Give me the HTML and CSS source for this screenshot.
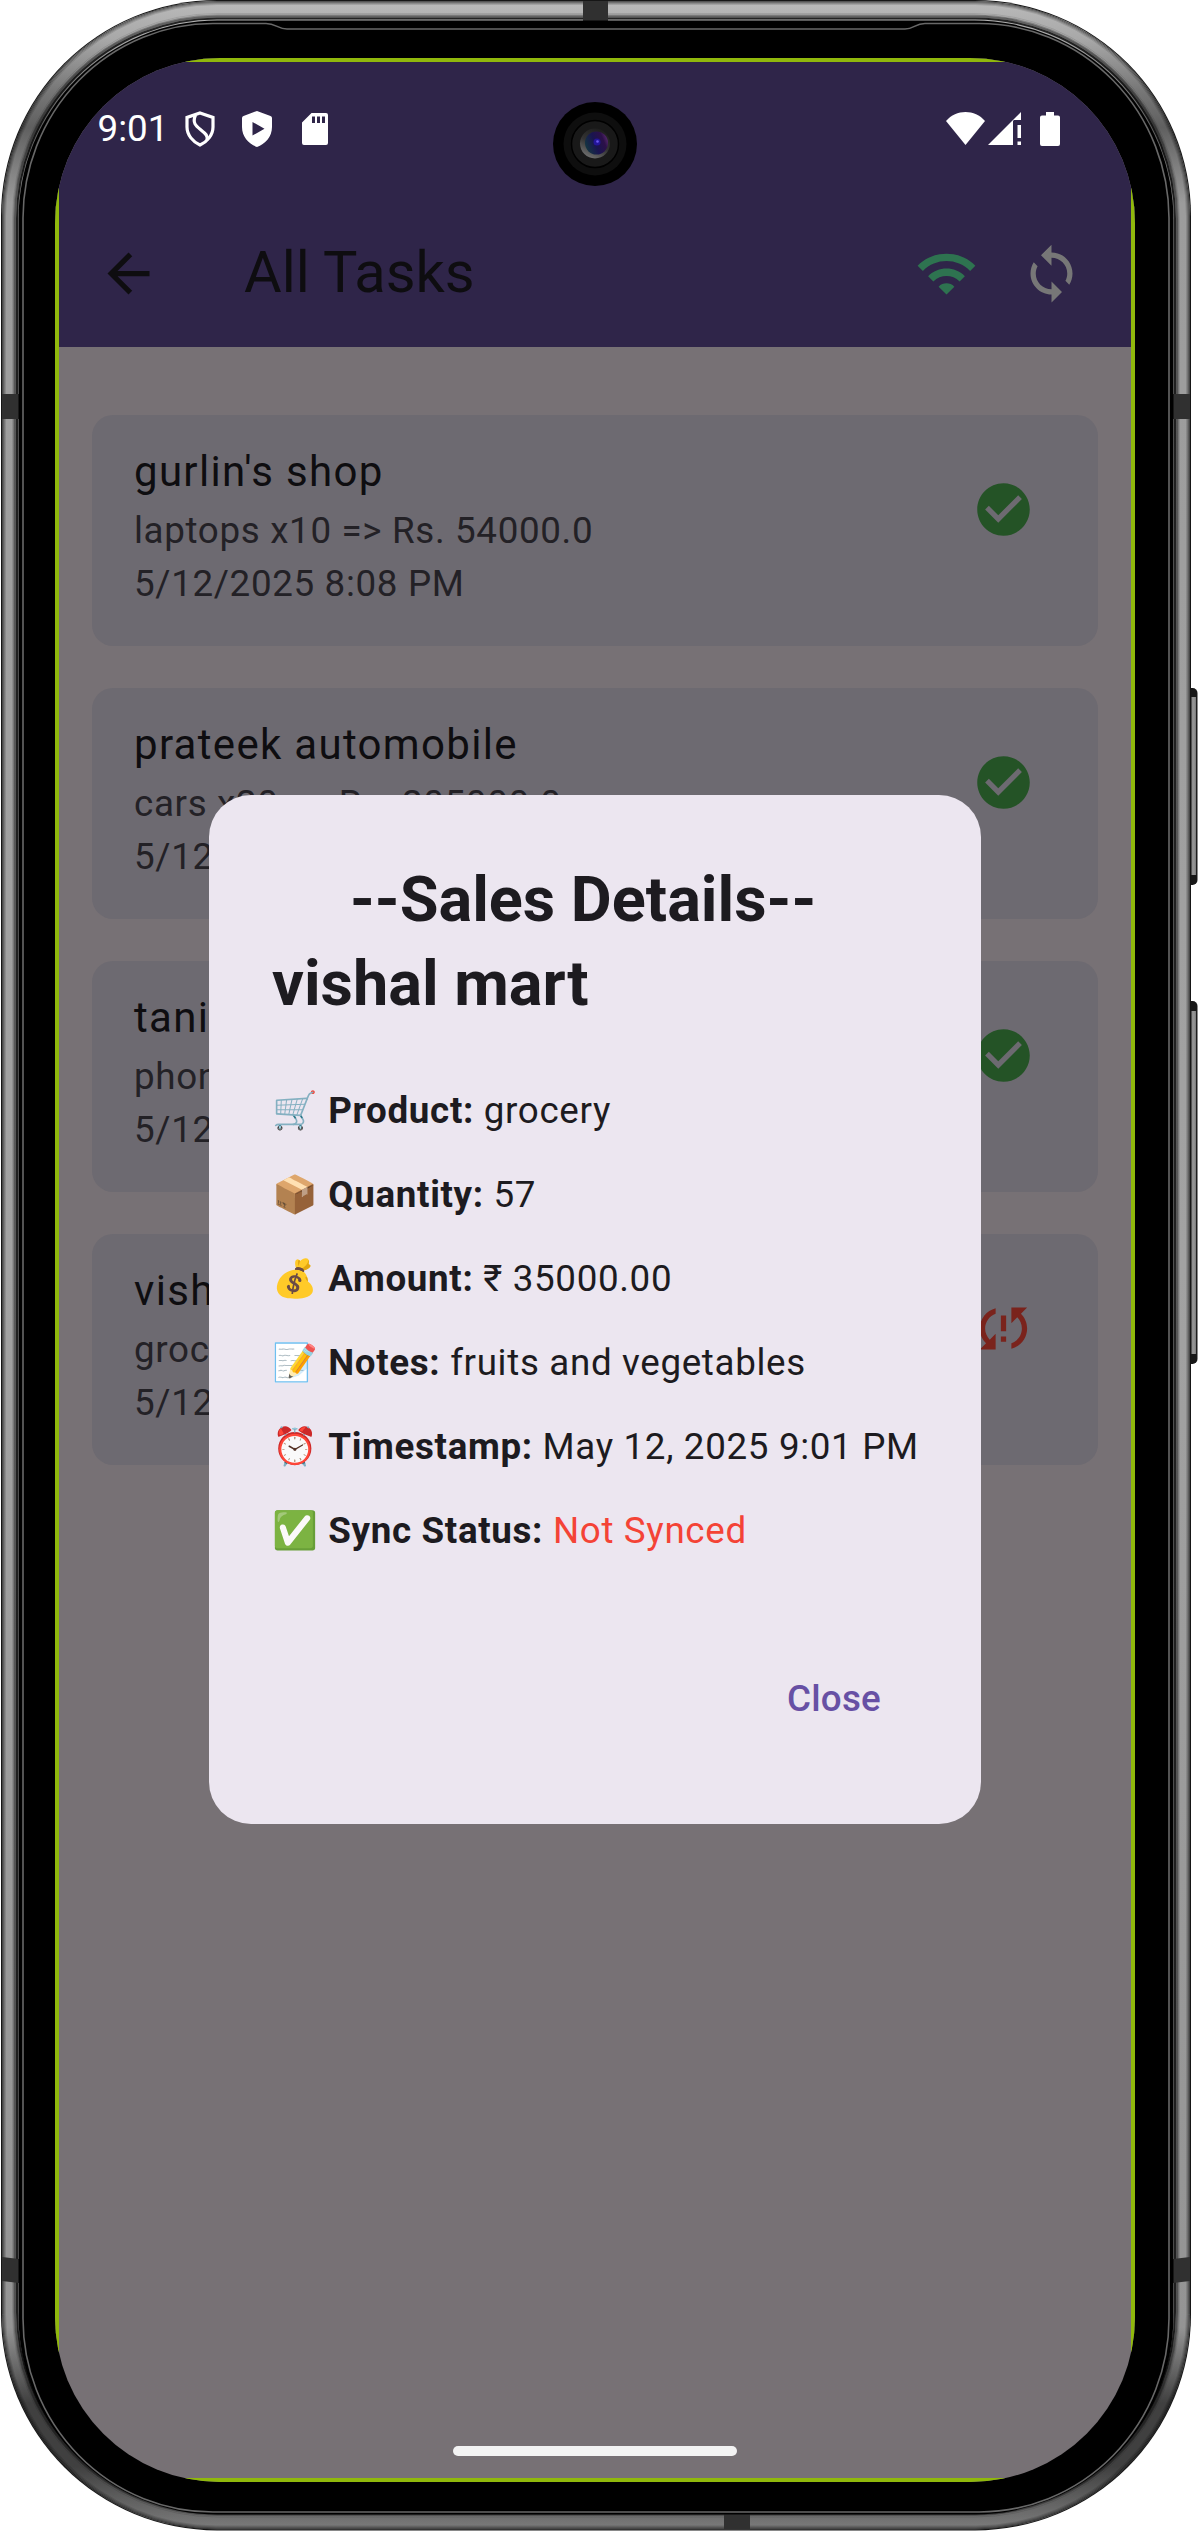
FILE: index.html
```html
<!DOCTYPE html>
<html lang="en">
<head>
<meta charset="utf-8">
<title>All Tasks</title>
<link rel="stylesheet" href="styles.css">
</head>
<body>
<div class="device">
  <svg class="frame" viewBox="0 0 1198 2531" aria-hidden="true">
    <defs>
      <linearGradient id="side" x1="0" y1="0" x2="0" y2="1">
        <stop offset="0" stop-color="#bababa"/><stop offset=".015" stop-color="#a8a8a8"/><stop offset=".035" stop-color="#787878"/><stop offset=".05" stop-color="#606060"/><stop offset=".08" stop-color="#9c9c9c"/>
        <stop offset=".5" stop-color="#a2a2a2"/><stop offset=".92" stop-color="#949494"/><stop offset=".95" stop-color="#404040"/><stop offset=".975" stop-color="#404040"/><stop offset="1" stop-color="#7c7c7c"/>
      </linearGradient>
      <linearGradient id="key" x1="0" x2="1">
        <stop offset="0" stop-color="#333"/><stop offset=".3" stop-color="#999"/><stop offset=".8" stop-color="#8a8a8a"/><stop offset="1" stop-color="#222"/>
      </linearGradient>
    </defs>
    <rect x="1184" y="688" width="13.500" height="197" rx="5" fill="#181818"/>
    <rect x="1191" y="697" width="5.500" height="178" fill="url(#key)"/>
    <rect x="1184" y="1001" width="13.500" height="363" rx="5" fill="#181818"/>
    <rect x="1191" y="1011" width="5.500" height="343" fill="url(#key)"/>
    <rect x="1" y="0" width="1190" height="2530.500" rx="216" fill="#161616"/>
    <rect x="2" y="1" width="1188" height="2528.500" rx="215" fill="url(#side)"/>
    <g fill="none" stroke="#000">
      <rect x="2.500" y="1.500" width="1187" height="2527.500" rx="214.500" stroke-opacity=".55"/>
      <rect x="3.500" y="2.500" width="1185" height="2525.500" rx="213.500" stroke-opacity=".4"/>
      <rect x="4.500" y="3.500" width="1183" height="2523.500" rx="212.500" stroke-opacity=".25"/>
      <rect x="5.500" y="4.500" width="1181" height="2521.500" rx="211.500" stroke-opacity=".12"/>
      <rect x="12.500" y="13.500" width="1167" height="2503.500" rx="204.500" stroke-opacity=".1"/>
      <rect x="13.500" y="15" width="1165" height="2500.500" rx="203.500" stroke-opacity=".25"/>
      <rect x="15" y="16.500" width="1162" height="2497.500" rx="202" stroke-opacity=".45" stroke-width="2"/>
      <rect x="17" y="18.500" width="1158" height="2493.500" rx="200" stroke-opacity=".8" stroke-width="2"/>
    </g>
    <g fill="#303030">
      <rect x="583" y="1" width="25" height="20"/><rect x="724" y="2513" width="26" height="16"/>
      <path d="M2 394h17v25H2zM1173 394h17v25h-17zM2 2257l17 2v24l-17-2zM1190 2257l-17 2v24l17-2z"/>
    </g>
    <rect x="18.500" y="20.500" width="1155" height="2494" rx="199"/>
    <path d="M23 218V2318A190 193.500 0 0 0 214 2512H978A190 193.500 0 0 0 1169 2318V218A190 195 0 0 0 979 23.500H925C915 23.500 914 29 905 29H287C278 29 276 23.500 266 23.500H213A190 195 0 0 0 23 218Z" fill="none" stroke="#686868" stroke-width="1.600"/>
  </svg>

  <main class="screen">
    <header class="top">
      <div class="status">
        <span class="clock">9:01</span>
        <svg class="s-shield" viewBox="0 0 30 36"><path d="M15 2 28 6.500V16C28 24 22 31 15 34 8 31 2 24 2 16V6.500Z" fill="none" stroke="#fff" stroke-width="3.200"/><path d="M10.500 4C7 12 11 15 16 19S23 25 22 29" fill="none" stroke="#fff" stroke-width="3.200"/></svg>
        <svg class="s-play" viewBox="0 0 30 36"><path fill="#fff" fill-rule="evenodd" d="M15 0 28.500 5Q30 5.500 30 7V16C30 26 23 33 15 36 7 33 0 26 0 16V7Q0 5.500 1.500 5ZM10.500 11V24.500L22.500 17.700Z"/></svg>
        <svg class="s-card" viewBox="0 0 26 32"><path fill="#fff" fill-rule="evenodd" d="M9.500 0H24Q26 0 26 2V30Q26 32 24 32H2Q0 32 0 30V9.500ZM10 3.500V10H13V3.500ZM15 3.500V10H18V3.500ZM20 3.500V10H23V3.500Z"/></svg>
        <svg class="s-wifi" viewBox="0 0 39 33"><path fill="#fff" d="M19.500 33 0 9C10-3 29-3 39 9Z"/></svg>
        <svg class="s-signal" viewBox="0 0 33 33"><path fill="#fff" d="M33 0V8H26L25 9V33H0ZM29.500 13H33V26H29.500ZM29.500 29.500H33V33H29.500Z"/></svg>
        <svg class="s-batt" viewBox="0 0 20 34"><path fill="#fff" d="M6 0H14V3.500H18Q20 3.500 20 5.500V32Q20 34 18 34H2Q0 34 0 32V5.500Q0 3.500 2 3.500H6Z"/></svg>
      </div>
      <div class="appbar">
        <svg class="icon" viewBox="0 0 24 24"><path fill="#0e0d10" d="M20 11H7.830l5.590-5.590L12 4l-8 8 8 8 1.410-1.410L7.830 13H20v-2z"/></svg>
        <h1>All Tasks</h1>
        <svg class="icon" viewBox="0 0 24 24"><path fill="#2e7350" d="M1 9l2 2c4.970-4.970 13.030-4.970 18 0l2-2C16.930 2.930 7.080 2.930 1 9zm8 8l3 3 3-3c-1.650-1.660-4.340-1.660-6 0zm-4-4l2 2c2.760-2.760 7.240-2.760 10 0l2-2C15.140 9.140 8.870 9.140 5 13z"/></svg>
        <svg class="icon" viewBox="0 0 24 24"><path fill="#777" d="M12 4V1L8 5l4 4V6c3.310 0 6 2.690 6 6 0 1.010-.25 1.970-.7 2.800l1.460 1.460C19.540 15.030 20 13.570 20 12c0-4.420-3.580-8-8-8zm0 14c-3.310 0-6-2.690-6-6 0-1.010.25-1.970.7-2.800L5.240 7.740C4.460 8.970 4 10.430 4 12c0 4.420 3.580 8 8 8v3l4-4-4-4v3z"/></svg>
      </div>
    </header>

    <section class="list">
      <article class="card">
        <div><h2>gurlin's shop</h2><p>laptops x10 =&gt; Rs. 54000.0</p><p>5/12/2025 8:08 PM</p></div>
        <svg class="icon" viewBox="0 0 24 24"><path fill="#245326" d="M12 2C6.480 2 2 6.480 2 12s4.480 10 10 10 10-4.480 10-10S17.520 2 12 2zm-2 15l-5-5 1.410-1.410L10 14.170l7.590-7.590L19 8l-9 9z"/></svg>
      </article>
      <article class="card">
        <div><h2>prateek automobile</h2><p>cars x20 =&gt; Rs. 205000.0</p><p>5/12</p></div>
        <svg class="icon" viewBox="0 0 24 24"><path fill="#245326" d="M12 2C6.480 2 2 6.480 2 12s4.480 10 10 10 10-4.480 10-10S17.520 2 12 2zm-2 15l-5-5 1.410-1.410L10 14.170l7.590-7.590L19 8l-9 9z"/></svg>
      </article>
      <article class="card">
        <div><h2>tani</h2><p>phon</p><p>5/12</p></div>
        <svg class="icon" viewBox="0 0 24 24"><path fill="#245326" d="M12 2C6.480 2 2 6.480 2 12s4.480 10 10 10 10-4.480 10-10S17.520 2 12 2zm-2 15l-5-5 1.410-1.410L10 14.170l7.590-7.590L19 8l-9 9z"/></svg>
      </article>
      <article class="card">
        <div><h2>vish</h2><p>groc</p><p>5/12</p></div>
        <svg class="icon" viewBox="0 0 24 24"><path fill="#7a231c" d="M3 12c0 2.210.91 4.200 2.360 5.640L3 20h6v-6l-2.240 2.240C5.680 15.150 5 13.660 5 12c0-2.610 1.670-4.830 4-5.650V4.260C5.550 5.150 3 8.270 3 12zm8 5h2v-2h-2v2zM21 4h-6v6l2.240-2.240C18.320 8.850 19 10.340 19 12c0 2.610-1.670 4.830-4 5.650v2.090c3.450-.89 6-4.010 6-7.740 0-2.210-.91-4.200-2.360-5.640L21 4zm-10 9h2V7h-2v6z"/></svg>
      </article>
    </section>

    <div class="homebar"></div>

    <svg class="camera" viewBox="0 0 84 84" aria-hidden="true">
      <defs>
        <linearGradient id="lens" x1="0" y1=".7" x2="1" y2=".3"><stop offset="0" stop-color="#14383f"/><stop offset=".45" stop-color="#191450"/><stop offset=".8" stop-color="#2c1048"/><stop offset="1" stop-color="#5a2a70"/></linearGradient>
        <linearGradient id="rim" x1=".2" y1="1" x2=".7" y2="0"><stop offset="0" stop-color="#777"/><stop offset=".5" stop-color="#333"/><stop offset="1" stop-color="#1c1c1c"/></linearGradient>
      </defs>
      <circle cx="42" cy="42" r="42"/><circle cx="42" cy="42" r="31.500" fill="#0e0e0e"/><circle cx="42" cy="42" r="23.500" fill="#191919" stroke="#000" stroke-width="1.500"/>
      <circle cx="42" cy="41.500" r="15" fill="url(#rim)"/>
      <circle cx="43.500" cy="41" r="11.500" fill="url(#lens)"/><circle cx="44" cy="40" r="3.500" fill="#24159a"/><circle cx="44.500" cy="39.500" r="1.300" fill="#6a58f0"/>
    </svg>

    <section class="dialog" role="dialog">
      <h2><span class="lead">--Sales Details--</span>vishal mart</h2>
      <ul>
        <li><span class="emoji">🛒</span> <b>Product:</b> grocery</li>
        <li><span class="emoji">📦</span> <b>Quantity:</b> 57</li>
        <li><span class="emoji">💰</span> <b>Amount:</b> ₹ 35000.00</li>
        <li><span class="emoji">📝</span> <b>Notes:</b> fruits and vegetables</li>
        <li><span class="emoji">⏰</span> <b>Timestamp:</b> May 12, 2025 9:01 PM</li>
        <li><span class="emoji">✅</span> <b>Sync Status:</b> <span class="bad">Not Synced</span></li>
      </ul>
      <div class="actions"><button>Close</button></div>
    </section>
  </main>
</div>
</body>
</html>
```
FILE: styles.css
```css
* { box-sizing: border-box; margin: 0; padding: 0; }
body { background: #fff; font-family: Roboto, "Noto Color Emoji", sans-serif; }
svg { display: block; flex: none; }
.device { display: grid; width: 1198px; height: 2531px; overflow: hidden; }
.frame { grid-area: 1 / 1; width: 1198px; height: 2531px; }
.screen {
  grid-area: 1 / 1; position: relative; overflow: hidden;
  width: 1080px; height: 2424px; margin: 58px 0 0 55px; border-radius: 165px;
  background: #777175; display: flex; flex-direction: column;
}
.screen::after {
  content: ""; position: absolute; inset: 0; pointer-events: none;
  border: 4px solid #90b80c;
}
.top { height: 289px; background: #2f2549; }
.status { height: 142px; padding: 53px 75px 0 42.500px; display: flex; align-items: flex-start; }
.clock { width: 87px; height: 36px; line-height: 36px; font-size: 36.750px; color: #fff; }
.s-shield { width: 30px; height: 36px; }
.s-play { width: 30px; height: 36px; margin-left: 27px; }
.s-card { width: 26px; height: 32px; margin: 2px 0 0 30px; }
.s-wifi { width: 39px; height: 33px; margin: 1px 0 0 auto; }
.s-signal { width: 33px; height: 33px; margin: 1px 19px 0 3px; }
.s-batt { width: 20px; height: 34px; margin-top: 1px; }
.icon { width: 63px; height: 63px; }
.appbar { height: 147px; padding: 0 52.500px 0 42px; display: flex; align-items: center; gap: 42px; }
.appbar h1 { flex: 1; padding: 0 0 3px 42px; font-weight: 400; font-size: 57.750px; line-height: 74px; color: #0e0d10; }
.list { flex: 1; padding: 68px 37px 0; display: flex; flex-direction: column; gap: 42px; }
.card {
  height: 231px; border-radius: 21px; background: #6d6a71; padding: 24px 63px 0 42px;
  display: flex; justify-content: space-between;
}
.card .icon { margin-top: 39px; }
.card h2 { font-weight: 400; font-size: 42px; line-height: 66px; letter-spacing: 1.310px; color: #0e0d10; }
.card p { font-size: 36.750px; line-height: 52.500px; letter-spacing: .66px; color: #232126; }
.homebar { width: 284px; height: 10px; border-radius: 5px; background: #f3f3f3; align-self: center; margin-bottom: 26px; }
.camera { position: absolute; left: 498px; top: 44px; width: 84px; height: 84px; }
.dialog {
  position: absolute; left: 154px; top: 737px; width: 772px; height: 1029px;
  padding: 63px; border-radius: 42px; background: #ece6f0; color: #1d1b20;
}
.dialog h2 { font-size: 63px; line-height: 84px; font-weight: 700; }
.lead { display: block; padding-left: 78px; }
.dialog ul { list-style: none; margin-top: 43px; }
.dialog li { height: 84px; line-height: 84px; font-size: 36.750px; letter-spacing: .66px; white-space: nowrap; }
.bad { color: #f44336; }
.actions { margin-top: 63px; display: flex; justify-content: flex-end; }
.actions button {
  width: 168px; height: 126px; border: 0; background: none; color: #6750a4;
  font: 500 36.750px/52.500px Roboto, sans-serif; letter-spacing: .26px;
}
```
